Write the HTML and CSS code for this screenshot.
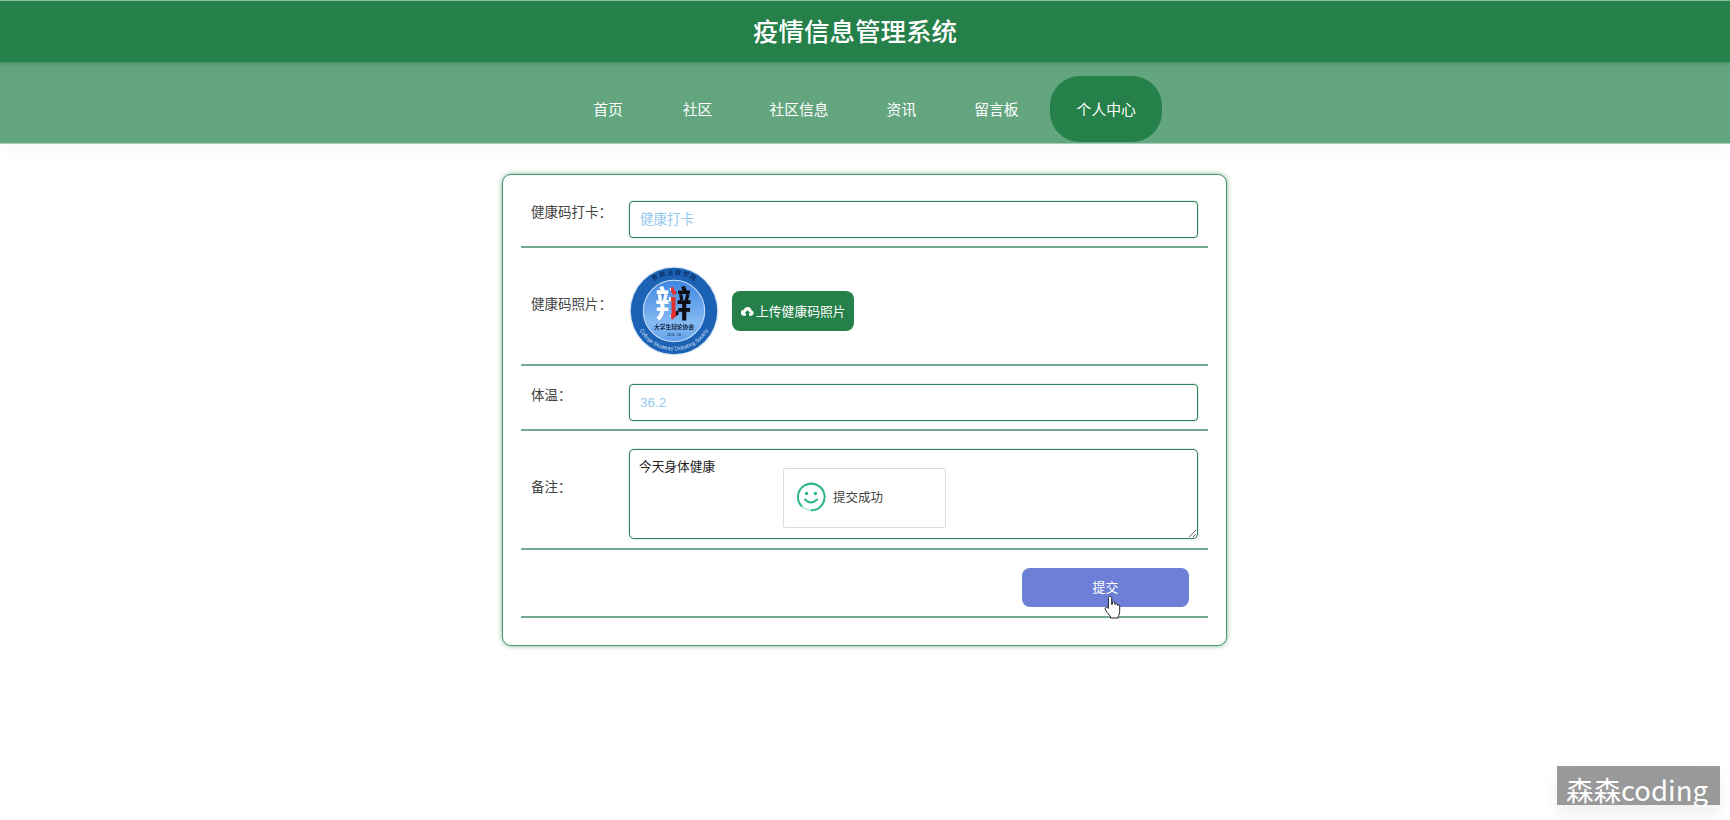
FILE: index.html
```html
<!DOCTYPE html>
<html lang="zh-CN">
<head>
<meta charset="utf-8">
<title>疫情信息管理系统</title>
<link rel="stylesheet" href="styles.css">
</head>
<body>
<header class="top">疫情信息管理系统</header>
<nav class="nav">
  <a class="nav-item nav-first">首页</a>
  <a class="nav-item nav-shift">社区</a>
  <a class="nav-item">社区信息</a>
  <a class="nav-item">资讯</a>
  <a class="nav-item">留言板</a>
  <a class="nav-item active">个人中心</a>
</nav>
<main class="card">
  <div class="row">
    <label class="label">健康码打卡：</label>
    <input class="field" placeholder="健康打卡">
  </div>
  <div class="row">
    <label class="label">健康码照片：</label>
    <svg class="logo" viewBox="0 0 88 88">
      <defs>
        <linearGradient id="disc" x1="0" y1="0" x2="0" y2="1">
          <stop offset="0" stop-color="#3f86e2"/>
          <stop offset=".7" stop-color="#86bbf3"/>
          <stop offset="1" stop-color="#5f9fe8"/>
        </linearGradient>
        <linearGradient id="ink" x1="0" y1="0" x2="1" y2="0">
          <stop offset=".44" stop-color="#fff"/>
          <stop offset=".44" stop-color="#e2302a"/>
          <stop offset=".58" stop-color="#e2302a"/>
          <stop offset=".58" stop-color="#0e0e14"/>
        </linearGradient>
        <path id="arcTop" d="M8.500 44a35.500 35.500 0 0 1 71 0"/>
        <path id="arcBot" d="M5.500 44a38.500 38.500 0 0 0 77 0"/>
      </defs>
      <circle cx="44" cy="44" r="43.500" fill="#dce8f5"/>
      <circle cx="44" cy="44" r="42.300" fill="#1b62b4"/>
      <circle cx="44" cy="44" r="30" fill="url(#disc)" stroke="#cfe1f7" stroke-width="1"/>
      <text class="logo-arc"><textPath href="#arcTop" startOffset="50%" text-anchor="middle">贵 微 法 政 学 院</textPath></text>
      <text class="logo-en"><textPath href="#arcBot" startOffset="50%" text-anchor="middle">College Students' Debating Society</textPath></text>
      <text class="logo-char" x="43.500" y="50">辩</text>
      <text class="logo-sub" x="44" y="62">大学生辩论协会</text>
      <text class="logo-date" x="44" y="68.500">2011. 10</text>
    </svg>
    <button class="upload">
      <svg class="cloud" viewBox="0 0 14 12"><path d="M11.300 4.600A4.400 4.400 0 0 0 2.900 4 3.200 3.200 0 0 0 3.300 10.700H5.300V7.800H3.700L7 4.600l3.300 3.200H8.700v2.900h2.400a3.100 3.100 0 0 0 .2-6.100z"/></svg>
      <span>上传健康码照片</span>
    </button>
  </div>
  <div class="row">
    <label class="label">体温：</label>
    <input class="field" placeholder="36.2">
  </div>
  <div class="row">
    <label class="label">备注：</label>
    <textarea class="memo">今天身体健康</textarea>
  </div>
  <div class="row row-end">
    <button class="submit"><span>提交</span></button>
  </div>
</main>
<div class="toast">
  <svg class="smile" viewBox="0 0 30 30">
    <path class="smile-ring" d="M6 24.500A13.300 13.300 0 1 1 15 28.300"/>
    <path class="smile-fade" d="M6 24.500A13.300 13.300 0 0 0 15 28.300"/>
    <circle class="smile-eye" cx="10.600" cy="11.500" r="1.700"/>
    <circle class="smile-eye" cx="19.400" cy="11.500" r="1.700"/>
    <path class="smile-ring" d="M9 17.500q6 6 12 0"/>
  </svg>
  <span class="toast-text">提交成功</span>
</div>
<svg class="pointer" viewBox="0 0 18 24">
  <path d="M6 1.500c1 0 1.700.7 1.700 1.700v6.200l.6-.1V8c0-1.700 2.500-1.700 2.600 0v1.500c.3-1.400 2.500-1.300 2.500.3v.7c.4-1 2.300-.8 2.300.7v5c0 2.500-.8 3.700-1.500 5.300v1.500H6.500v-1.500C5 19.500 1.300 15.500 1.100 14c-.2-1.600 1.300-2.300 2.500-1.300l.8.800V3.200C4.400 2.200 5 1.500 6 1.500z"/>
</svg>
<div class="mark">森森coding</div>
</body>
</html>
```
FILE: styles.css
```css
* { box-sizing: border-box; }
html, body { margin: 0; padding: 0; }
body {
  position: relative;
  width: 1730px;
  height: 820px;
  overflow: hidden;
  background: #fff;
  font-family: "Noto Sans CJK SC", "Liberation Sans", sans-serif;
  color: #333;
}
.top {
  position: relative;
  z-index: 2;
  height: 62px;
  border-top: 1px solid #8dbda0;
  background: #258049;
  color: #fff;
  font-size: 25.500px;
  font-weight: 500;
  line-height: 57px;
  text-align: center;
  padding-right: 20px;
  box-shadow: 0 1px 4px rgba(30, 90, 55, .45);
}
.nav {
  height: 82px;
  padding-top: 14px;
  background: #62a57e;
  border-bottom: 1px solid #a9cdb8;
  display: flex;
  justify-content: center;
  gap: 5px;
  box-shadow: 0 6px 14px rgba(98, 165, 126, .06);
}
.nav-item {
  height: 66px;
  padding: 0 26.500px;
  color: #fff;
  font-size: 14.800px;
  line-height: 65px;
  border-radius: 30px;
}
.nav-first { margin: 0 1px 0 -1px; }
.nav-shift { margin: 0 -1px 0 1px; }
.nav-item.active { background: #258049; }
.card {
  width: 725px;
  height: 472px;
  margin: 30px 0 0 502px;
  padding: 8px 18px 0;
  background: #fff;
  border: 1px solid #4a9470;
  border-radius: 9px;
  box-shadow: 0 0 5px rgba(37, 128, 73, .6);
}
.row {
  display: flex;
  align-items: center;
  padding: 18px 10px 9px 10px;
  border-bottom: 2px solid #72ab8d;
}
.row:first-child .field, .row:nth-child(3) .field { margin-bottom: -1px; }
.row-end { justify-content: flex-end; padding-right: 19px; }
.label {
  width: 98px;
  flex: none;
  margin-bottom: 16px;
  font-size: 13.500px;
  line-height: 20px;
  color: #444;
}
.field {
  flex: 1;
  height: 37px;
  padding: 0 10px;
  border: 1px solid #2f8057;
  border-radius: 4px;
  box-shadow: 0 0 2px rgba(37, 128, 73, .4);
  font: 13.500px "Liberation Sans", "Noto Sans CJK SC", sans-serif;
  outline: 0;
}
.field::placeholder { color: #94c8ec; opacity: 1; }
.logo { width: 90px; height: 90px; margin: 0 -1px -1px 0; flex: none; filter: blur(.35px); }
.logo-arc { font-size: 6px; font-weight: 700; fill: #0e2c5e; }
.logo-en { font: 5.200px "Liberation Sans", sans-serif; fill: #cfe2f7; }
.logo-char { font-size: 36px; font-weight: 700; text-anchor: middle; fill: url(#ink); }
.logo-sub { font-size: 5.600px; font-weight: 700; fill: #14233f; text-anchor: middle; }
.logo-date { font: 3.600px "Liberation Sans", sans-serif; fill: #14233f; text-anchor: middle; }
.upload {
  display: flex;
  align-items: center;
  gap: 2px;
  height: 40px;
  width: 122px;
  margin: 1px 0 0 14px;
  padding: 0 0 0 9px;
  border: 0;
  border-radius: 8px;
  background: #258049;
  color: #fff;
  font: 12.800px/40px "Noto Sans CJK SC", sans-serif;
  white-space: nowrap;
}
.cloud { width: 13px; height: 11px; fill: #fff; flex: none; }
.memo {
  flex: 1;
  height: 90px;
  padding: 7px 9px;
  border: 1px solid #2f8057;
  border-radius: 5px;
  box-shadow: 0 0 2px rgba(37, 128, 73, .4);
  font: 12.700px/18px "Noto Sans CJK SC", sans-serif;
  color: #222;
  outline: 0;
}
.submit {
  width: 167px;
  height: 39px;
  padding: 0 0 2px;
  border: 0;
  border-radius: 8px;
  background: #6d7fd6;
  color: #fff;
  font: 13px "Noto Sans CJK SC", sans-serif;
}
.toast {
  position: absolute;
  left: 783px;
  top: 468px;
  width: 163px;
  height: 60px;
  display: flex;
  align-items: center;
  gap: 7px;
  padding-left: 12px;
  background: #fff;
  border: 1px solid #dcdcdc;
  border-radius: 2px;
  font-size: 12.500px;
  color: #444;
}
.toast-text { margin-bottom: 3px; }
.smile { width: 30px; height: 30px; flex: none; margin-bottom: 2px; }
.smile-ring { fill: none; stroke: #2db585; stroke-width: 2; stroke-linecap: round; }
.smile-fade { fill: none; stroke: #bfe8d8; stroke-width: 2; }
.smile-eye { fill: #2db585; }
.pointer {
  position: absolute;
  left: 1104px;
  top: 595px;
  width: 18px;
  height: 24px;
  fill: #fff;
  stroke: #222;
  stroke-width: 1;
}
.mark {
  position: absolute;
  left: 1557px;
  top: 766px;
  width: 163px;
  height: 39px;
  padding-left: 9px;
  background: #999;
  color: #fff;
  font-size: 27.500px;
  line-height: 46px;
  white-space: nowrap;
  box-shadow: 0 10px 16px rgba(0, 0, 0, .06);
}
```
